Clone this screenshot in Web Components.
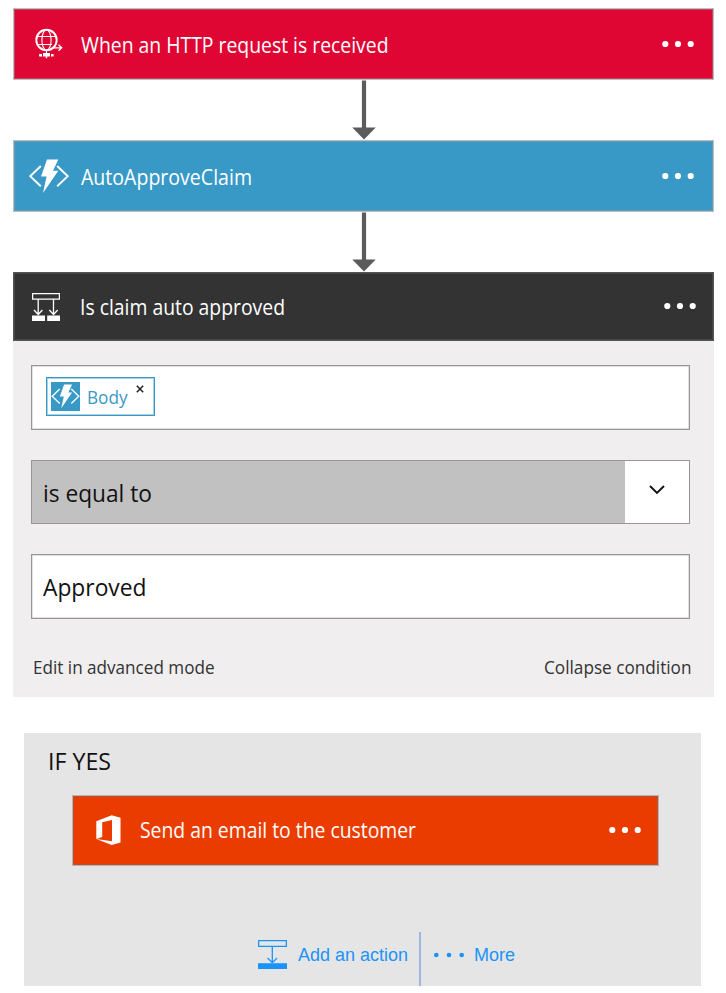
<!DOCTYPE html>
<html lang="en">
<head>
<meta charset="utf-8">
<title>Logic app designer</title>
<style>
body{margin:0;background:#fff;width:726px;height:993px;overflow:hidden;font-family:"Open Sans","Noto Sans",sans-serif;color:#111}
</style>
</head>
<body>
<flow-designer></flow-designer>
<script>
const define=(name,html,init)=>{
  const t=document.createElement('template');t.innerHTML=html;
  customElements.define(name,class extends HTMLElement{
    connectedCallback(){
      if(this.shadowRoot)return;
      this.attachShadow({mode:'open'}).append(t.content.cloneNode(true));
      if(init)init(this,this.shadowRoot);
    }
  });
};

/* One line of text, condensed horizontally to the given measure. */
define('fit-label',`<style>
:host{display:block;white-space:nowrap;flex:none;line-height:30px;height:30px}
span{display:inline-block;transform-origin:0 50%}
</style><span></span>`,(el,root)=>{
  const s=root.querySelector('span'),w=+el.getAttribute('measure');
  s.textContent=el.getAttribute('text');
  el.style.width=w+'px';
  s.style.transform='scaleX('+w/s.getBoundingClientRect().width+')';
});

const bolt='<path d="M18 .5H29.300L24 11.700H29.300L14 34L17.600 17.600H12Z" fill="#fff"/><path d="M11.800 7L1.200 17.200L11.800 27.300M28.200 7L38.800 17.200L28.200 27.300" fill="none" stroke="#fff" stroke-width="1.900"/>';
const icons={
  http:['0 0 28 32',28,32,'<g fill="none" stroke="#fff"><circle cx="11.500" cy="12" r="10.200" stroke-width="1.900"/><g stroke-width="1.100"><ellipse cx="11.500" cy="12" rx="4.600" ry="10.200"/><path d="M2.500 8.500H20.500M2.500 16.500H17M11.500 22V25"/></g><path d="M18 19.800H26.500M23.500 16.800L26.700 19.800L23.500 22.800" stroke-width="1.300"/></g><path d="M8 25H15V28.600H8ZM4.100 26H7V28.500H4.100ZM16 26H18.600V28.500H16ZM10.800 28H12.200V30.300H10.800Z" fill="#fff"/>'],
  bolt:['0 0 40 35',40,35,bolt],
  small:['-.5 -2.500 41 40',29,29,bolt],
  condition:['0 0 28 28',28,28,'<path d="M.6 .6H27.400V6.200H.6ZM6.200 6V21M21.500 6V21M2 17L6.200 21.500L10.400 17M17.300 17L21.500 21.500L25.700 17" fill="none" stroke="#fff" stroke-width="1.300"/><path d="M0 22.500H13V28H0ZM15.200 22.500H28V28H15.200Z" fill="#fff"/>'],
  office:['0 0 26 30',26,30,'<path d="M.3 6.200L15.700 .2L24.500 2.700V27.500L15.700 30L.3 24L16 26.200V5L6.200 7.300V22L.3 24Z" fill="#fff"/>'],
  action:['0 0 29 29',29,29,'<path d="M.6 .6H28.400V6.300H.6ZM14.300 6.300V22.500M9.500 18L14.300 22.600L19.100 18" fill="none" stroke="#1b93fb" stroke-width="1.300"/><path d="M0 23.200H29V29H0Z" fill="#1b93fb"/>'],
  close:['0 0 8 8',8,8,'<path d="M.8 .8L7.200 7.200M7.200 .8L.8 7.200" stroke="#222" stroke-width="1.500"/>'],
  chevron:['0 0 16 10',16,10,'<path d="M1 1L8 8L15 1" fill="none" stroke="#111" stroke-width="1.900"/>']
};
define('ui-icon','<style>:host{display:block;flex:none}svg{display:block}</style>',(el,root)=>{
  const [v,w,h,p]=icons[el.getAttribute('name')];
  root.innerHTML+=`<svg viewBox="${v}" width="${w}" height="${h}">${p}</svg>`;
});
define('dot-menu',`<style>:host{display:block;flex:none;--dot:#fff;--r:3.100px}:host([small]){--dot:#1b93fb;--r:2.350px}svg{display:block}circle{fill:var(--dot);r:var(--r)}</style>
<svg width="32" height="8"><circle cx="3.300" cy="4"/><circle cx="16" cy="4"/><circle cx="28.700" cy="4"/></svg>`);

define('step-card',`<style>
:host{display:flex;box-sizing:border-box;align-items:center;color:#fff;border:1px solid var(--outer);box-shadow:inset 0 0 0 1px var(--inner);background:var(--fill);font-size:21px}
.icon{display:flex;align-items:center;flex:none;width:var(--icon-col);padding-left:var(--lead);box-sizing:border-box}
.text{padding-top:var(--drop,0px)}
dot-menu{margin:0 var(--tail,19.500px) 1px auto}
</style><div class="icon"><slot name="icon"></slot></div><div class="text"><slot></slot></div><dot-menu></dot-menu>`);

define('flow-arrow',`<style>:host{display:block;height:60px}svg{display:block;margin-left:352px}</style>
<svg width="24" height="60"><path d="M12 .5V48" stroke="#5b5b5b" stroke-width="4.200"/><path d="M.3 47.500H23.700L12 59.500Z" fill="#5b5b5b"/></svg>`);

define('field-box',`<style>
:host{display:flex;box-sizing:border-box;height:64.500px;border:1px solid #969696;box-shadow:inset 0 0 0 .5px #c4c4c4;background:#fff;align-items:center;padding-left:11px;font-size:23.500px;color:#111}
:host([select]){background:#c1c1c1}
::slotted(fit-label){margin-top:2px}
</style><slot></slot>`);
define('select-toggle',`<style>:host{display:flex;align-items:center;justify-content:center;width:64px;height:62px;background:#fff;margin-left:auto;padding-bottom:4px;box-sizing:border-box}</style><ui-icon name="chevron"></ui-icon>`);

define('value-token',`<style>
:host{display:flex;box-sizing:border-box;width:109px;height:39px;border:1px solid #3999c6;box-shadow:inset 0 0 0 1px #a5d0e5;background:#fff;color:#3999c6;font-size:18.500px;align-items:center;margin-left:3px;margin-bottom:1px;padding-left:4px}
.tile{width:29px;height:29px;background:#3999c6;margin-right:7px}
fit-label{margin-top:1px}
.x{align-self:flex-start;margin:7px 0 0 8.500px}
</style><div class="tile"><ui-icon name="small"></ui-icon></div><fit-label text="Body" measure="40.500"></fit-label><ui-icon class="x" name="close"></ui-icon>`);

define('condition-panel',`<style>
:host{display:flex;flex-direction:column;box-sizing:border-box;height:356px;background:#f0eeef;padding:24px 24.500px 0 18px;gap:30px}
.links{display:flex;justify-content:space-between;font-size:17.800px;color:#333;margin:3px -2px 0 2px}
</style>
<field-box><value-token></value-token></field-box>
<field-box select><fit-label text="is equal to" measure="109"></fit-label><select-toggle></select-toggle></field-box>
<field-box><fit-label text="Approved" measure="103.500"></fit-label></field-box>
<div class="links"><fit-label text="Edit in advanced mode" measure="181.500"></fit-label><fit-label text="Collapse condition" measure="147.500"></fit-label></div>`);

define('branch-panel',`<style>
:host{display:flex;flex-direction:column;box-sizing:border-box;width:677px;height:253px;margin:36px 0 0 11px;background:#e5e5e5;padding:13px 42px 0 48px;overflow:hidden}
.title{font-size:23.500px;margin-left:-24px}
step-card{margin-top:19px;height:71px;--outer:#b9b4b1;--inner:#b85332;--fill:#eb3c00;--icon-col:67px;--lead:22.500px;--tail:17.500px;--drop:0px}
step-card fit-label{margin-top:-1px}
step-card ui-icon{margin-top:-2px}
.actions{display:flex;font-family:"Liberation Sans",Arial,sans-serif;font-size:18px;color:#1b93fb;margin:66px 0 0 186px;height:54px}
.actions ui-icon{margin:8px 11px 0 0}
.actions fit-label{margin-top:8px}
.line{width:2px;background:#a1b5e4;margin:0 12px 0 11px}
dot-menu{margin:18.500px 9px 0 0}
</style>
<div class="title"><fit-label text="IF YES" measure="63"></fit-label></div>
<step-card><ui-icon slot="icon" name="office"></ui-icon><fit-label text="Send an email to the customer" measure="276"></fit-label></step-card>
<div class="actions"><ui-icon name="action"></ui-icon><fit-label text="Add an action" measure="110"></fit-label><div class="line"></div><dot-menu small></dot-menu><fit-label text="More" measure="41"></fit-label></div>`);

define('flow-designer',`<style>
:host{display:block;padding:8px 12px 0 13px}
flow-arrow{margin-left:-13px}
step-card{height:72px;--icon-col:67px;--drop:2px}
.http{--outer:#c3bbbd;--inner:#b74960;--fill:#df0634;--lead:21px}
.func{--outer:#b5bec2;--inner:#6b9bae;--fill:#3999c6;--lead:15px}
.cond{height:69px;--outer:#555;--inner:#444;--fill:#333;--icon-col:65.500px;--lead:18px;--tail:17.500px;--drop:0px}
</style>
<step-card class="http"><ui-icon slot="icon" name="http"></ui-icon><fit-label text="When an HTTP request is received" measure="307.500"></fit-label></step-card>
<flow-arrow></flow-arrow>
<step-card class="func"><ui-icon slot="icon" name="bolt"></ui-icon><fit-label text="AutoApproveClaim" measure="171"></fit-label></step-card>
<flow-arrow></flow-arrow>
<step-card class="cond"><ui-icon slot="icon" name="condition"></ui-icon><fit-label text="Is claim auto approved" measure="205"></fit-label></step-card>
<condition-panel></condition-panel>
<branch-panel></branch-panel>`);
</script>
</body>
</html>
